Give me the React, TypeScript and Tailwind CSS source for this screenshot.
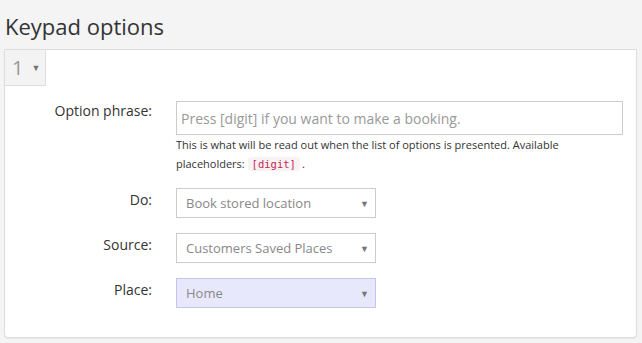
import type { ReactNode } from 'react';

const FONT = { fontFamily: '"Open Sans", "Noto Sans", sans-serif' };

function Caret() {
  return <span className="text-[9px] leading-none text-[#777]">▼</span>;
}

interface RowProps {
  label: string;
  children: ReactNode;
  labelPad?: string;
}

function Row({ label, children, labelPad = 'pt-[3px]' }: RowProps) {
  return (
    <div className="flex">
      <div className={`w-[147px] shrink-0 text-right text-[14px] leading-[18px] text-[#333] ${labelPad}`}>{label}</div>
      <div className="ml-[24px] flex-1">{children}</div>
    </div>
  );
}

function Select({ value, highlight = false }: { value: string; highlight?: boolean }) {
  return (
    <div
      className={`flex h-[30px] w-[200px] items-center justify-between border pl-[9px] pr-[6px] text-[13px] ${
        highlight ? 'border-[#c4c4ec] bg-[#e8e8fd] text-[#888]' : 'border-[#ccc] bg-white text-[#888]'
      }`}
    >
      <span className="pt-[2px]">{value}</span>
      <Caret />
    </div>
  );
}

export default function App() {
  return (
    <div className="h-[343px] w-[642px] bg-[#f4f4f4] pl-[4px] pr-[5px]" style={FONT}>
      {/* header */}
      <h2 className="pl-[1px] pt-[12px] text-[22px] leading-[28px] text-[#333]">Keypad options</h2>

      <div className="mt-[9px] h-[289px] rounded-b-[4px] border border-[#ddd] bg-white shadow-[0_1px_1px_rgba(0,0,0,0.05)]">
        {/* tab */}
        <div className="flex h-[36px] w-[41px] items-center gap-[8px] border-b border-r border-[#ddd] bg-[#f3f3f3] pl-[7px] text-[20px] text-[#999]">
          <span>1</span>
          <Caret />
        </div>

        <div className="pr-[13px] pt-[15px]">
          <Row label="Option phrase:" labelPad="pt-[1px]">
            <div className="flex h-[34px] items-center border border-[#ccc] px-[4px] text-[14px] text-[#999]">
              Press [digit] if you want to make a booking.
            </div>
            <p className="text-[11px] leading-[19px] text-[#333]">
              This is what will be read out when the list of options is presented. Available
              <br />
              placeholders:{' '}
              <code
                className="rounded-[3px] bg-[#f9f2f4] px-[4px] py-[1px] text-[10.5px] text-[#c7254e]"
                style={{ fontFamily: '"DejaVu Sans Mono", monospace' }}
              >
                [digit]
              </code>
              <span className="ml-[2px]">.</span>
            </p>
          </Row>

          <div className="mt-[14px] flex flex-col gap-[15px]">
            <Row label="Do:">
              <Select value="Book stored location" />
            </Row>
            <Row label="Source:">
              <Select value="Customers Saved Places" />
            </Row>
            <Row label="Place:">
              <Select value="Home" highlight />
            </Row>
          </div>
        </div>
      </div>
    </div>
  );
}
